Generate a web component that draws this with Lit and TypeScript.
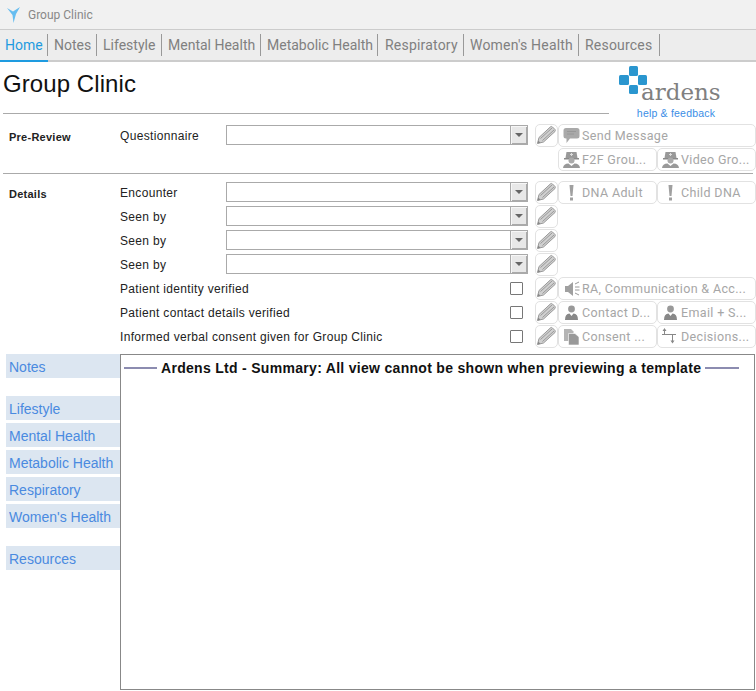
import { LitElement, css, html, svg } from 'lit';
import { customElement } from 'lit/decorators.js';

const ICONS: Record<string, unknown> = {
  pencil: svg`<path d="M1.5 18.5 L3 12.5 L14.5 1.8 Q15.5 1 16.5 2 L19 4.5 Q19.6 5.5 19 6.5 L7.5 17 Z" fill="#d0d0d0" stroke="#999" stroke-width="1"/><path d="M4.5 13.5 L16 3 M6.5 15.5 L18 5" stroke="#999" stroke-width="1"/><path d="M1.5 18.5 L2.3 15.5 L4.5 17.7 Z" fill="#888"/>`,
  chat: svg`<path d="M5 3 H16 Q18.5 3 18.5 5.5 V11 Q18.5 13.5 16 13.5 H9 L5.5 18 V13.5 H5 Q2.5 13.5 2.5 11 V5.5 Q2.5 3 5 3 Z" fill="#a9a9a9"/><path d="M6 6.5 H15 M6 9 H13" stroke="#989898"/>`,
  people: svg`<path d="M5.5 3 H15.5 L16.5 9 H4.5 Z" fill="#999"/><path d="M9 5.5 H12 M10.5 4 V7" stroke="#ddd"/><rect x="3" y="9" width="15" height="1.5" fill="#8a8a8a"/><circle cx="10.5" cy="11.5" r="3" fill="#aaa"/><path d="M2 19 Q2.5 14.5 7.5 14.5 L10.5 17 L13.5 14.5 Q18.5 14.5 19 19 Z" fill="#999"/>`,
  alert: svg`<path d="M8.5 3 H12.5 L11.5 14 H9.5 Z" fill="#a0a0a0"/><rect x="9" y="15.5" width="3" height="3" fill="#a0a0a0"/>`,
  speaker: svg`<path d="M4 8 H7 L12 4 V18 L7 14 H4 Z" fill="#a0a0a0"/><path d="M14 6 L18 4 M14 9 H18.5 M14 12 H18.5 M14 15 L18 17" stroke="#999" stroke-width="1"/>`,
  person: svg`<circle cx="10.5" cy="7" r="3.4" fill="#999"/><path d="M4 18 Q4 11.5 8.5 11.5 L10.5 14 L12.5 11.5 Q17 11.5 17 18 Z" fill="#888"/>`,
  docs: svg`<path d="M3 3 H10 L12.5 5.5 V15 H3 Z" fill="#b4b4b4"/><path d="M7.5 7.5 H14 L18 11 V19 H7.5 Z" fill="#999" stroke="#fff" stroke-width="0.6"/>`,
  decisions: svg`<path d="M2 8.5 H16" stroke="#888" stroke-width="1"/><path d="M4.5 8 V3.5 M12.5 9 V15" stroke="#888" stroke-width="1"/><path d="M2.5 5 L4.5 2 L6.5 5 Z M10.5 14.5 L12.5 17.5 L14.5 14.5 Z" fill="#888"/>`,
};

const icon = (name: string) =>
  html`<svg class="ico" viewBox="0 0 21 21" width="21" height="21">${ICONS[name]}</svg>`;

const TABS = ['Home', 'Notes', 'Lifestyle', 'Mental Health', 'Metabolic Health', 'Respiratory', "Women's Health", 'Resources'];

type Act = { icon: string; label: string };
type Row = { label: string; check?: boolean; select?: boolean; pencil?: boolean; acts?: Act[] };

const PRE_ROWS: Row[] = [
  { label: 'Questionnaire', select: true, pencil: true, acts: [{ icon: 'chat', label: 'Send Message' }] },
  { label: '', acts: [{ icon: 'people', label: 'F2F Grou...' }, { icon: 'people', label: 'Video Gro...' }] },
];

const DETAIL_ROWS: Row[] = [
  { label: 'Encounter', select: true, pencil: true, acts: [{ icon: 'alert', label: 'DNA Adult' }, { icon: 'alert', label: 'Child DNA' }] },
  { label: 'Seen by', select: true, pencil: true },
  { label: 'Seen by', select: true, pencil: true },
  { label: 'Seen by', select: true, pencil: true },
  { label: 'Patient identity verified', check: true, pencil: true, acts: [{ icon: 'speaker', label: 'RA, Communication & Acc...' }] },
  { label: 'Patient contact details verified', check: true, pencil: true, acts: [{ icon: 'person', label: 'Contact D...' }, { icon: 'person', label: 'Email + S...' }] },
  { label: 'Informed verbal consent given for Group Clinic', check: true, pencil: true, acts: [{ icon: 'docs', label: 'Consent ...' }, { icon: 'decisions', label: 'Decisions...' }] },
];

// null = gap in the side list
const SIDE = ['Notes', null, 'Lifestyle', 'Mental Health', 'Metabolic Health', 'Respiratory', "Women's Health", null, 'Resources'];

@customElement('app-root')
export class AppRoot extends LitElement {
  static styles = css`
    :host {
      display: block;
      width: 756px;
      height: 691px;
      overflow: hidden;
      background: #fff;
      font-family: 'Liberation Sans', Arial, sans-serif;
      color: #222;
    }
    .titlebar {
      height: 29px;
      background: #f1f1f1;
      border-bottom: 1px solid #ccc;
      display: flex;
      align-items: center;
      padding-left: 6px;
      gap: 6px;
      font-family: Roboto, sans-serif;
      font-size: 12px;
      color: #888;
    }
    .tabs {
      height: 30px;
      background: #ededed;
      border-bottom: 2px solid #ccc;
      display: grid;
      grid-template-columns: 48px 49px 65px 99px 117px 86px 115px 81px;
      justify-content: start;
      align-items: center;
      font-family: Roboto, sans-serif;
      font-size: 14px;
      color: #808080;
      position: relative;
    }
    .tab {
      height: 22px;
      line-height: 22px;
      padding-left: 6px;
      box-sizing: border-box;
      border-right: 1px solid #999;
      white-space: nowrap;
    }
    .tab:nth-child(n + 6) {
      letter-spacing: 0.2px;
    }
    .tab:nth-child(6) {
      padding-left: 7px;
    }
    .tab.active {
      color: #1e9be0;
      padding-left: 5px;
    }
    .underline {
      position: absolute;
      left: 0;
      bottom: -2px;
      width: 48px;
      height: 2px;
      background: #1e9be0;
    }
    .head {
      height: 62px;
      position: relative;
      padding-left: 3px;
    }
    h1 {
      margin: 0;
      font-size: 24px;
      font-weight: 400;
      line-height: 28px;
      padding-top: 8px;
      letter-spacing: 0.08px;
      color: #111;
    }
    .rule {
      position: absolute;
      left: 3px;
      top: 51px;
      width: 606px;
      height: 1px;
      background: #aaa;
    }
    .logo {
      position: absolute;
      left: 610px;
      top: 2px;
      width: 120px;
      text-align: center;
    }
    .logo svg {
      display: block;
    }
    .help {
      font-size: 10.5px;
      color: #3a8ee6;
      margin-top: 2px;
      line-height: 14px;
      padding-left: 12px;
      letter-spacing: 0.2px;
    }
    .section {
      display: grid;
      grid-template-columns: 114px 106px 302px 30px 99px 99px;
      grid-auto-rows: 24px;
      padding-left: 6px;
      font-size: 12px;
    }
    .divider {
      height: 1px;
      background: #aaa;
      margin: 1px 3px 7px 3px;
    }
    .sec-label {
      font-size: 11px;
      font-weight: 700;
      padding: 6px 0 0 3px;
      line-height: 14px;
      letter-spacing: 0.25px;
    }
    .lab {
      line-height: 25px;
      white-space: nowrap;
      letter-spacing: 0.33px;
    }
    .lab.wide {
      grid-column: span 2;
      display: flex;
      justify-content: space-between;
      align-items: center;
      height: 23px;
      line-height: 23px;
      padding-right: 5px;
    }
    .lab.wide .txt {
      margin-top: 2px;
    }
    .check {
      width: 11px;
      height: 11px;
      border: 1px solid #777;
      border-radius: 1px;
      background: #fff;
    }
    .select {
      height: 20px;
      margin-top: 1px;
      width: 302px;
      box-sizing: border-box;
      border: 1px solid #aaa;
      display: flex;
      justify-content: flex-end;
      background: #fff;
    }
    .arrow {
      width: 17px;
      box-sizing: border-box;
      background: #e8e8e8;
      border-left: 1px solid #aaa;
      box-shadow: inset 1px 1px 0 #f7f7f7, inset -1px -1px 0 #aaa;
      display: flex;
      align-items: center;
      justify-content: center;
    }
    .arrow::after {
      content: '';
      border: 4px solid transparent;
      border-top: 4px solid #666;
      border-bottom: 0;
    }
    .pencil {
      margin-left: 7px;
      width: 23px;
      height: 23px;
      box-sizing: border-box;
      border: 1px solid #e2e2e2;
      border-radius: 5px;
      display: flex;
      align-items: center;
      justify-content: center;
    }
    .act {
      height: 23px;
      box-sizing: border-box;
      border: 1px solid #e2e2e2;
      border-radius: 5px;
      display: flex;
      align-items: center;
      gap: 0;
      padding-left: 2px;
      color: #a6a6a6;
      white-space: nowrap;
      overflow: hidden;
      font-family: Roboto, sans-serif;
      font-size: 12.5px;
      letter-spacing: 0.35px;
    }
    .act.full,
    .none {
      grid-column: span 2;
    }
    .ico {
      flex: none;
    }
    .bottom {
      display: flex;
      padding-left: 6px;
      margin-top: 5px;
    }
    .side {
      width: 114px;
      display: flex;
      flex-direction: column;
      gap: 3px;
      font-size: 14px;
      color: #4a8ae0;
    }
    .side-item {
      height: 24px;
      line-height: 26px;
      padding-left: 3px;
      background: #dce6f1;
      white-space: nowrap;
    }
    .side-gap {
      height: 12px;
    }
    .panel {
      width: 635px;
      height: 336px;
      box-sizing: border-box;
      border: 1px solid #888;
      padding: 5px 14px 0 3px;
    }
    .legend {
      display: flex;
      align-items: center;
      gap: 4px;
      font-size: 14px;
      letter-spacing: 0.3px;
      font-weight: 700;
      color: #111;
      white-space: nowrap;
    }
    .legend i {
      flex: none;
      width: 33px;
      height: 2px;
      background: #8c8cb0;
    }
    .legend i:last-child {
      width: 34px;
    }
  `;

  private renderRows(rows: Row[], title: string) {
    return rows.map((r, i) => {
      const acts = r.acts ?? [];
      return html`
        <div class="sec-label">${i === 0 ? title : ''}</div>
        ${r.check
          ? html`<div class="lab wide"><span class="txt">${r.label}</span><span class="check"></span></div>`
          : html`<div class="lab">${r.label}</div>`}
        ${r.select
          ? html`<div class="select"><div class="arrow"></div></div>`
          : r.check
            ? ''
            : html`<div></div>`}
        ${r.pencil ? html`<div class="pencil">${icon('pencil')}</div>` : html`<div></div>`}
        ${acts.length
          ? acts.map((a) => html`<div class="act ${acts.length === 1 ? 'full' : ''}">${icon(a.icon)}${a.label}</div>`)
          : html`<div class="none"></div>`}
      `;
    });
  }

  render() {
    return html`
      <div class="titlebar">
        <svg width="16" height="20" viewBox="0 0 16 20">
          <path d="M1 3 L7 6.5 L14 2 L10 9 L7.5 18 L6.5 10 Z" fill="#66bdf0" />
        </svg>
        Group Clinic
      </div>
      <div class="tabs">
        ${TABS.map((t, i) => html`<div class="tab ${i === 0 ? 'active' : ''}">${t}</div>`)}
        <div class="underline"></div>
      </div>
      <div class="head">
        <h1>Group Clinic</h1>
        <div class="rule"></div>
        <div class="logo">
          <svg width="120" height="40" viewBox="0 0 120 40">
            <rect x="19" y="2" width="9" height="10" rx="1.5" fill="#2a96cf" />
            <rect x="9" y="11" width="10" height="10" rx="1.5" fill="#2a96cf" />
            <rect x="28" y="11" width="9" height="10" rx="1.5" fill="#2a96cf" />
            <rect x="19" y="21" width="9" height="9" rx="1.5" fill="#2a96cf" />
            <text x="31" y="36" font-family="DejaVu Serif, serif" font-size="23" fill="#808080">ardens</text>
          </svg>
          <div class="help">help &amp; feedback</div>
        </div>
      </div>
      <div class="section">${this.renderRows(PRE_ROWS, 'Pre-Review')}</div>
      <div class="divider"></div>
      <div class="section">${this.renderRows(DETAIL_ROWS, 'Details')}</div>
      <div class="bottom">
        <div class="side">
          ${SIDE.map((s) => (s ? html`<div class="side-item">${s}</div>` : html`<div class="side-gap"></div>`))}
        </div>
        <div class="panel">
          <div class="legend"><i></i>Ardens Ltd - Summary: All view cannot be shown when previewing a template<i></i></div>
        </div>
      </div>
    `;
  }
}
